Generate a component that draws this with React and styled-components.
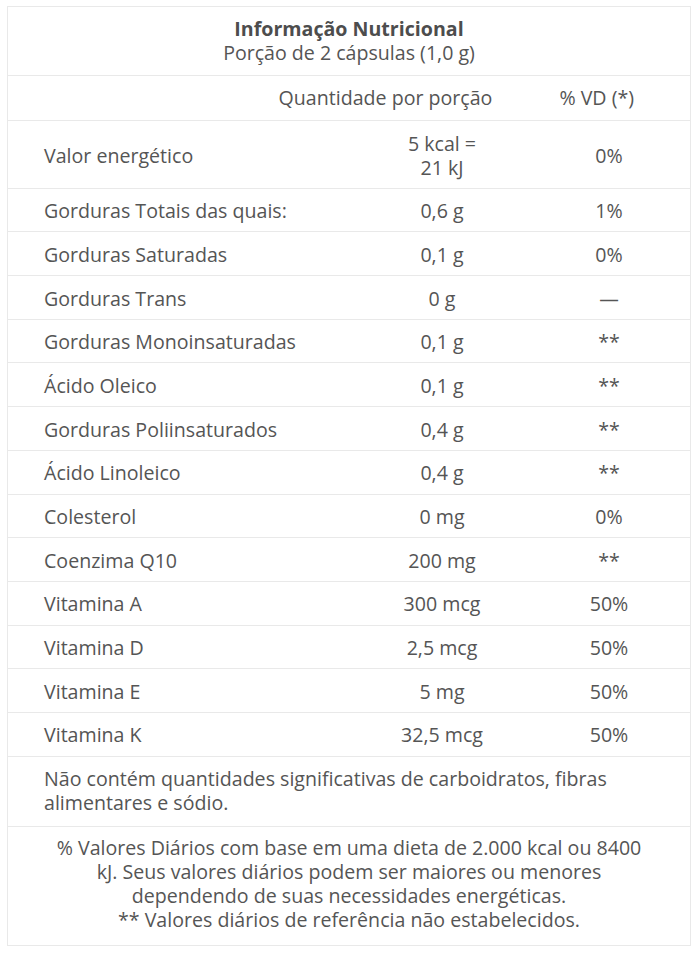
import React from 'react'
import styled, { createGlobalStyle } from 'styled-components'

const GlobalStyle = createGlobalStyle`
  body {
    margin: 0;
    background: #ffffff;
    font-family: "Open Sans", "Liberation Sans", sans-serif;
    color: #555555;
  }
`

const Table = styled.div`
  width: 682px;
  margin: 6px 0 0 7px;
  border: 1px solid #e9e9e9;
  font-size: 19.6px;
  line-height: 24px;
`

const TitleBlock = styled.div`
  padding: 10px 20px;
  text-align: center;
  border-bottom: 1px solid #e9e9e9;
`

const Title = styled.div`
  font-weight: 700;
  color: #4d4d4d;
`

const HeaderRow = styled.div`
  display: flex;
  justify-content: flex-end;
  padding: 10px 56px 10px 0;
  border-bottom: 1px solid #e9e9e9;
`

const HeaderCell = styled.span`
  margin-left: ${props => props.gap || 0}px;
`

const Row = styled.div`
  display: grid;
  grid-template-columns: 348px 172px 1fr;
  align-items: center;
  border-bottom: 1px solid #e9e9e9;
`

const Cell = styled.div`
  padding: 10.5px 36px 8.2px;
  text-align: ${props => props.center ? 'center' : 'left'};
`

const Note = styled.div`
  padding: 10px 36px 11px;
  border-bottom: 1px solid #e9e9e9;
`

const Footer = styled.div`
  padding: 9.5px 40px 12.5px;
  text-align: center;
`

const rows = [
  ['Valor energético', <>5 kcal =<br />21 kJ</>, '0%'],
  ['Gorduras Totais das quais:', '0,6 g', '1%'],
  ['Gorduras Saturadas', '0,1 g', '0%'],
  ['Gorduras Trans', '0 g', '—'],
  ['Gorduras Monoinsaturadas', '0,1 g', '**'],
  ['Ácido Oleico', '0,1 g', '**'],
  ['Gorduras Poliinsaturados', '0,4 g', '**'],
  ['Ácido Linoleico', '0,4 g', '**'],
  ['Colesterol', '0 mg', '0%'],
  ['Coenzima Q10', '200 mg', '**'],
  ['Vitamina A', '300 mcg', '50%'],
  ['Vitamina D', '2,5 mcg', '50%'],
  ['Vitamina E', '5 mg', '50%'],
  ['Vitamina K', '32,5 mcg', '50%'],
]

const App = () => {
  return (
    <>
      <GlobalStyle />
      <Table>
        <TitleBlock>
          <Title>Informação Nutricional</Title>
          <div>Porção de 2 cápsulas (1,0 g)</div>
        </TitleBlock>
        <HeaderRow>
          <HeaderCell>Quantidade por porção</HeaderCell>
          <HeaderCell gap={67}>% VD (*)</HeaderCell>
        </HeaderRow>
        {rows.map(([label, amount, vd]) => (
          <Row key={label}>
            <Cell>{label}</Cell>
            <Cell center>{amount}</Cell>
            <Cell center>{vd}</Cell>
          </Row>
        ))}
        <Note>
          Não contém quantidades significativas de carboidratos, fibras alimentares e sódio.
        </Note>
        <Footer>
          % Valores Diários com base em uma dieta de 2.000 kcal ou 8400 kJ. Seus valores diários podem ser maiores ou menores dependendo de suas necessidades energéticas.<br />
          ** Valores diários de referência não estabelecidos.
        </Footer>
      </Table>
    </>
  )
}

export default App
